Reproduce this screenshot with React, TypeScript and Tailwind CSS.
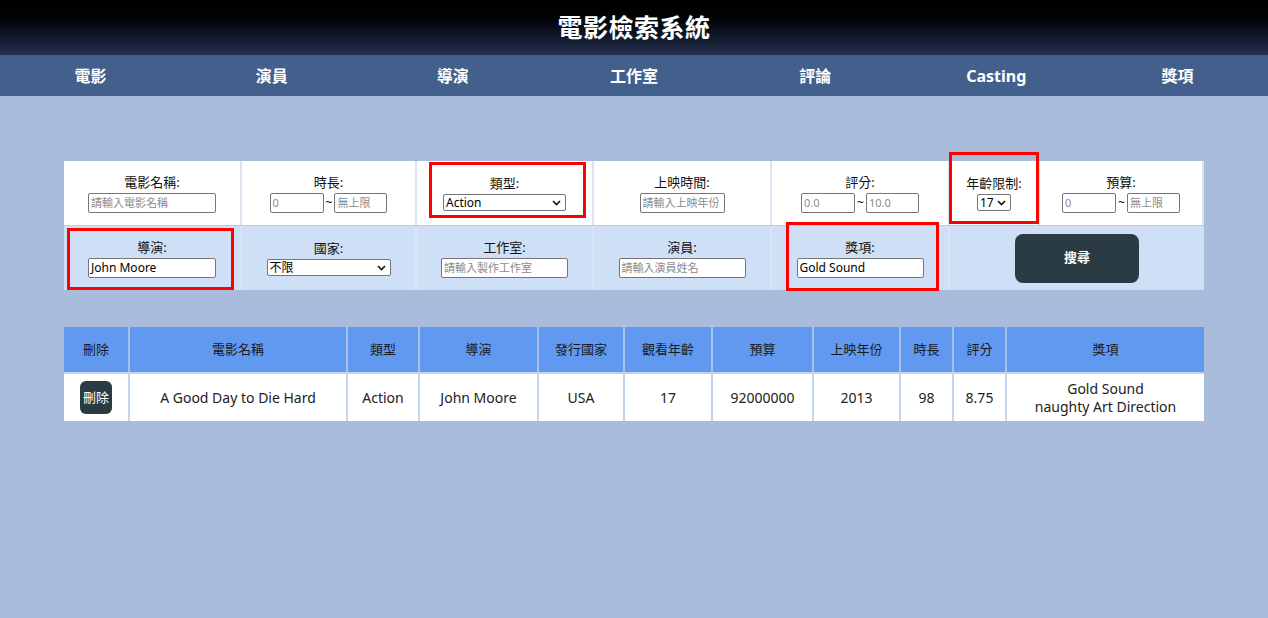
import React from "react";

const font = { fontFamily: '"Noto Sans", "Noto Sans CJK TC", sans-serif' };

function Chevron() {
  return (
    <svg width="9" height="6" viewBox="0 0 9 6" className="shrink-0">
      <path d="M1 1l3.5 3.5L8 1" fill="none" stroke="#111" strokeWidth="1.6" />
    </svg>
  );
}

function Select({ value, w }: { value: string; w: string }) {
  return (
    <div className={`${w} h-[17px] bg-white border border-[#767676] rounded-[2px] flex items-center justify-between pl-[2px] pr-[4px] text-[12px] text-black leading-none`}>
      <span>{value}</span>
      <Chevron />
    </div>
  );
}

function Input({ ph, value, w }: { ph?: string; value?: string; w: string }) {
  return (
    <div className={`${w} h-[20px] bg-white border border-[#767676] rounded-[2px] flex items-center px-[2px] leading-none whitespace-nowrap overflow-hidden`}>
      {value ? (
        <span className="text-black text-[12px]">{value}</span>
      ) : (
        <span className="text-[#8a8a8a] text-[11px]">{ph}</span>
      )}
    </div>
  );
}

function Range({ a, b }: { a: string; b: string }) {
  return (
    <div className="flex items-center gap-[1px]">
      <Input ph={a} w="w-[54px]" />
      <span className="text-[12px] text-black px-[1px]">~</span>
      <Input ph={b} w="w-[53px]" />
    </div>
  );
}

function Cell({ label, children, row2 }: { label: string; children: React.ReactNode; row2?: boolean }) {
  return (
    <div className={`flex flex-col items-center justify-center gap-[2px] ${row2 ? "bg-[#cfdff5]" : "bg-white"} border-r-2 border-[#dbe4f2] last:border-r-0`}>
      <div className="text-[13px] leading-[17px] text-[#111]">{label}</div>
      {children}
    </div>
  );
}

const cols = ["刪除", "電影名稱", "類型", "導演", "發行國家", "觀看年齡", "預算", "上映年份", "時長", "評分", "獎項"];

export default function App() {
  return (
    <div style={font} className="min-h-[618px] bg-[#aabcdb]">
      <header className="h-[55px] bg-gradient-to-b from-[#000000] to-[#24324f] flex items-center justify-center">
        <h1 className="text-white text-[25px] font-bold tracking-[0.5px]">電影檢索系統</h1>
      </header>
      <nav className="h-[41px] bg-[#435f8c] grid grid-cols-7 items-center text-white text-[16px] font-bold">
        {["電影", "演員", "導演", "工作室", "評論", "Casting", "獎項"].map((n) => (
          <div key={n} className="text-center">{n}</div>
        ))}
      </nav>

      <div className="pt-[65px] px-[64px]">
        <div className="relative w-[1140px]">
          <div className="grid grid-cols-[178px_175px_177px_178px_178px_90px_164px] grid-rows-[64px_65px]">
            <Cell label="電影名稱:"><Input ph="請輸入電影名稱" w="w-[128px]" /></Cell>
            <Cell label="時長:"><Range a="0" b="無上限" /></Cell>
            <Cell label="類型:"><Select value="Action" w="w-[123px]" /></Cell>
            <Cell label="上映時間:"><Input ph="請輸入上映年份" w="w-[85px]" /></Cell>
            <Cell label="評分:"><Range a="0.0" b="10.0" /></Cell>
            <Cell label="年齡限制:"><Select value="17" w="w-[34px]" /></Cell>
            <Cell label="預算:"><Range a="0" b="無上限" /></Cell>

            <div className="col-span-7 grid grid-cols-[178px_175px_177px_178px_178px_254px] border-t border-[#b9cbe6]">
              <Cell row2 label="導演:"><Input value="John Moore" w="w-[128px]" /></Cell>
              <Cell row2 label="國家:"><Select value="不限" w="w-[124px]" /></Cell>
              <Cell row2 label="工作室:"><Input ph="請輸入製作工作室" w="w-[127px]" /></Cell>
              <Cell row2 label="演員:"><Input ph="請輸入演員姓名" w="w-[127px]" /></Cell>
              <Cell row2 label="獎項:"><Input value="Gold Sound" w="w-[127px]" /></Cell>
              <div className="bg-[#cfdff5] flex items-center justify-center">
                <button className="w-[124px] h-[49px] rounded-[8px] bg-[#2b3b44] text-white text-[13px] font-bold">搜尋</button>
              </div>
            </div>
          </div>

          <div className="absolute left-[365px] top-[1px] w-[157px] h-[56px] border-[3px] border-[#ff0000]" />
          <div className="absolute left-[885px] top-[-9px] w-[90px] h-[72px] border-[3px] border-[#ff0000]" />
          <div className="absolute left-[3px] top-[67px] w-[167px] h-[62px] border-[3px] border-[#ff0000]" />
          <div className="absolute left-[722px] top-[61px] w-[153px] h-[69px] border-[3px] border-[#ff0000]" />
        </div>

        <div className="mt-[37px] w-[1140px]">
          <div className="grid grid-cols-[64px_218px_72px_119px_86px_88px_101px_87px_53px_53px_199px] h-[45px] bg-[#6199f1]">
            {cols.map((c, i) => (
              <div key={c} className={`flex items-center justify-center text-[13px] text-[#1a1a1a] ${i > 0 ? "border-l-2 border-[#a9c0e6]" : ""}`}>{c}</div>
            ))}
          </div>
          <div className="grid grid-cols-[64px_218px_72px_119px_86px_88px_101px_87px_53px_53px_199px] h-[49px] bg-white border-t-2 border-[#c4d4ee] text-[14px] text-[#222]">
            <div className="flex items-center justify-center">
              <button className="w-[32px] h-[33px] rounded-[6px] bg-[#2b3b44] text-white text-[13px] leading-none">刪除</button>
            </div>
            {["A Good Day to Die Hard", "Action", "John Moore", "USA", "17", "92000000", "2013", "98", "8.75"].map((v) => (
              <div key={v} className="flex items-center justify-center border-l-2 border-[#c4d4ee]">{v}</div>
            ))}
            <div className="flex flex-col items-center justify-center border-l-2 border-[#c4d4ee] leading-[18px]">
              <span>Gold Sound</span>
              <span>naughty Art Direction</span>
            </div>
          </div>
        </div>
      </div>
    </div>
  );
}
